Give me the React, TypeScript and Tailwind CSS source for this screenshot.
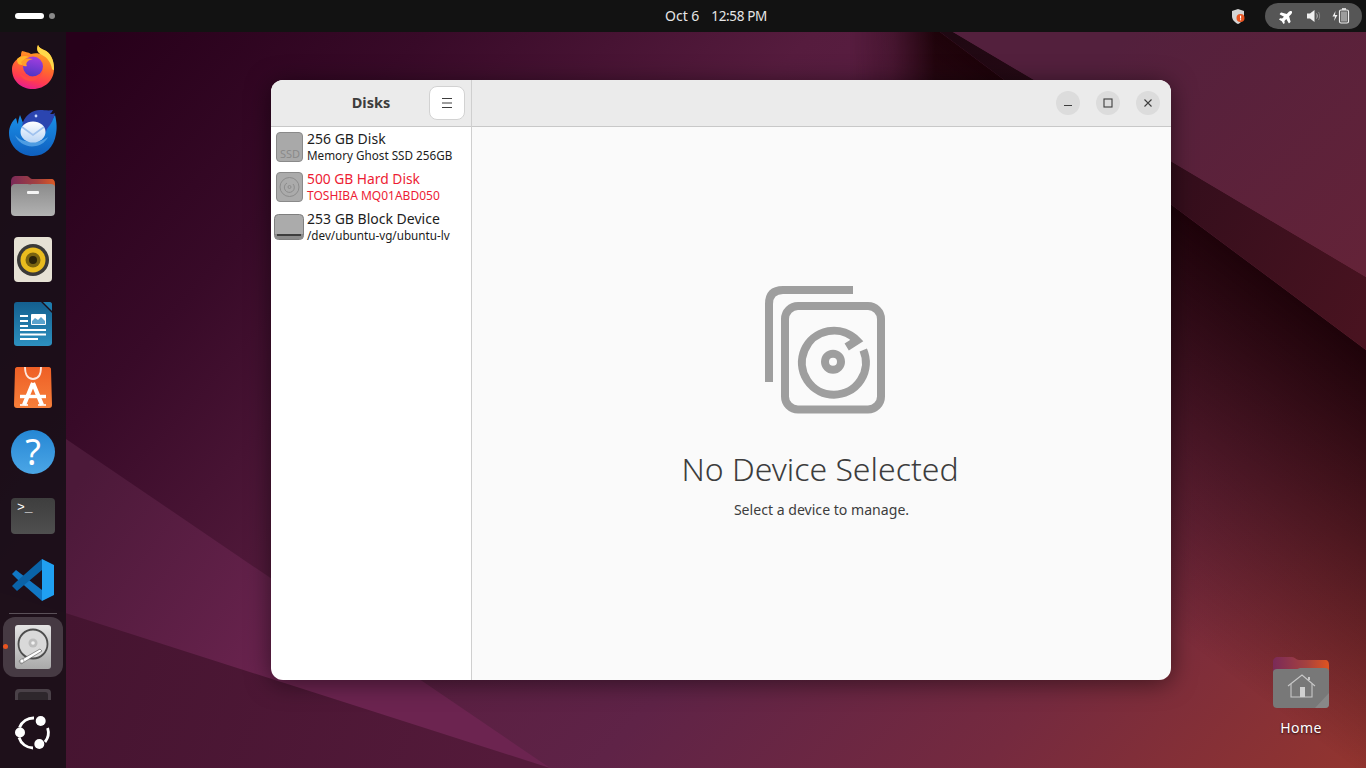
import React from "react";
import { FaPlane } from "react-icons/fa";

const font = { fontFamily: '"Noto Sans", "Open Sans", sans-serif' };

function Wallpaper() {
  return (
    <svg className="absolute inset-0 block" width="1366" height="768" viewBox="0 0 1366 768">
      <defs>
        <linearGradient id="base" gradientUnits="userSpaceOnUse" x1="100" y1="32" x2="1165" y2="991">
          <stop offset="0" stopColor="#27001a" />
          <stop offset="0.17" stopColor="#380a28" />
          <stop offset="0.37" stopColor="#561c3e" />
          <stop offset="0.6" stopColor="#5f2347" />
          <stop offset="0.8" stopColor="#752a3f" />
          <stop offset="1" stopColor="#93352f" />
        </linearGradient>
        <linearGradient id="lit" gradientUnits="userSpaceOnUse" x1="66" y1="500" x2="300" y2="670">
          <stop offset="0" stopColor="#4c1939" />
          <stop offset="1" stopColor="#6c2450" />
        </linearGradient>
        <linearGradient id="under" gradientUnits="userSpaceOnUse" x1="66" y1="620" x2="500" y2="768">
          <stop offset="0" stopColor="#451430" />
          <stop offset="1" stopColor="#541a3a" />
        </linearGradient>
        <linearGradient id="shade" gradientUnits="userSpaceOnUse" x1="1171" y1="205" x2="967" y2="477">
          <stop offset="0" stopColor="#1c0208" stopOpacity="0.97" />
          <stop offset="1" stopColor="#1c0208" stopOpacity="0" />
        </linearGradient>
        <linearGradient id="fadeX" gradientUnits="userSpaceOnUse" x1="850" y1="0" x2="935" y2="0">
          <stop offset="0" stopColor="#000" />
          <stop offset="0.5" stopColor="#555" />
          <stop offset="1" stopColor="#fff" />
        </linearGradient>
        <mask id="fadeMask" maskUnits="userSpaceOnUse" x="0" y="0" width="1366" height="768">
          <rect width="1366" height="768" fill="url(#fadeX)" />
        </mask>
        <linearGradient id="band" gradientUnits="userSpaceOnUse" x1="950" y1="40" x2="1366" y2="330">
          <stop offset="0" stopColor="#1f0812" />
          <stop offset="0.55" stopColor="#350e1c" />
          <stop offset="1" stopColor="#491320" />
        </linearGradient>
        <linearGradient id="topright" gradientUnits="userSpaceOnUse" x1="1130" y1="32" x2="1366" y2="277">
          <stop offset="0" stopColor="#53203d" />
          <stop offset="1" stopColor="#642338" />
        </linearGradient>
      </defs>
      <rect width="1366" height="768" fill="url(#base)" />
      <polygon points="66,439 550,768 66,768" fill="url(#lit)" />
      <polygon points="0,592 550,768 0,768" fill="url(#under)" />
      <polygon points="940,32 1366,350 1366,900 640,900 640,32" fill="url(#shade)" mask="url(#fadeMask)" />
      <polygon points="940,32 953,32 1366,277 1366,350" fill="url(#band)" />
      <polygon points="953,32 1366,32 1366,277" fill="url(#topright)" />
    </svg>
  );
}

function Firefox() {
  return (
    <svg width="48" height="48" viewBox="0 1 48 48">
      <defs>
        <linearGradient id="ffb" x1="0.7" y1="0" x2="0.4" y2="1">
          <stop offset="0" stopColor="#ffb21f" />
          <stop offset="0.5" stopColor="#ff6a2d" />
          <stop offset="0.8" stopColor="#ff3a52" />
          <stop offset="1" stopColor="#e51f8e" />
        </linearGradient>
        <linearGradient id="ffp" x1="0.6" y1="0" x2="0.4" y2="1">
          <stop offset="0" stopColor="#a33ee0" />
          <stop offset="1" stopColor="#4f35c4" />
        </linearGradient>
      </defs>
      <path d="M29 2C27 7 29 10 33 12C30 10 26 10 22 11C19 9 16 9 13 8C12 10 12 11 12 13C7 17 3 20 3 26C3 38 12 46 24 46C36 46 45 37 45 26C45 17 41 9 35 7C33 6 30 5 29 2Z" fill="url(#ffb)" />
      <path d="M29 2C27 7 29 10 33 12C39 15 42 20 43 26C45 28 45 27 45 25C45 16 41 9 35 7C33 6 30 5 29 2Z" fill="#ffd94a" />
      <path d="M8 16C11 13 16 12 20 14C16 15 13 18 13 22C9 22 8 19 8 16Z" fill="#ffb52b" />
      <circle cx="24" cy="23.5" r="10" fill="url(#ffp)" />
      <path d="M12 19C15 15 20 15 24 16C19 17 16 20 18 23C14 24 13 22 12 19Z" fill="#ff9d2a" />
      <path d="M34 27C33 33 28 38 22 38C16 38 11 34 10 29C13 33 18 35 23 34C28 33 32 31 34 27Z" fill="#ff4a44" />
    </svg>
  );
}

function Thunderbird() {
  return (
    <svg width="48" height="48" viewBox="0 1 48 48">
      <defs>
        <linearGradient id="tbb" x1="0.5" y1="0" x2="0.5" y2="1">
          <stop offset="0" stopColor="#1a8fe8" />
          <stop offset="1" stopColor="#0f5fbe" />
        </linearGradient>
        <linearGradient id="tbe" x1="0.5" y1="0" x2="0.5" y2="1">
          <stop offset="0" stopColor="#ffffff" />
          <stop offset="1" stopColor="#b8d4f5" />
        </linearGradient>
      </defs>
      <path d="M11 8C13 13 14 16 15 18C24 30 38 22 46 8C48 16 48 22 47 27C45 40 36 49 24 49C11 49 0 39 0 26C0 20 3 14 7 11C8 14 8 16 9 17C9 14 10 11 11 8Z" fill="url(#tbb)" />
      <path d="M14 15C17 8 23 3 31 3C36 3 39 4 44 3C43 5 42 6 41 7C43 7 45 7 46 6C45 12 42 17 38 22C36 29 28 32 20 31C14 27 12 21 14 15Z" fill="#2b45b0" />
      <circle cx="27" cy="9" r="1.4" fill="#c8d8ff" />
      <path d="M6 28C9 36 18 41 27 39C33 38 37 34 39 30C35 33 30 35 25 35C17 35 10 33 6 28Z" fill="#7ec3f5" opacity="0.55" />
      <ellipse cx="24" cy="25" rx="12.5" ry="10.5" fill="url(#tbe)" />
      <path d="M13 20L24 28L35 20" fill="none" stroke="#9fc2ee" strokeWidth="1.6" />
    </svg>
  );
}

function Files() {
  return (
    <svg width="48" height="48" viewBox="0 0 48 48">
      <defs>
        <linearGradient id="fback" x1="0" y1="0" x2="1" y2="0">
          <stop offset="0" stopColor="#7a2a58" />
          <stop offset="0.6" stopColor="#a5413f" />
          <stop offset="1" stopColor="#dc5a26" />
        </linearGradient>
        <linearGradient id="ffront" x1="0.5" y1="0" x2="0.5" y2="1">
          <stop offset="0" stopColor="#8b8b8b" />
          <stop offset="1" stopColor="#b2b2b2" />
        </linearGradient>
      </defs>
      <path d="M2 10C2 6 4 4 7 4H18C20 4 21 7 23 7H42C45 7 46 9 46 12V24H2Z" fill="url(#fback)" />
      <path d="M2 16C2 14 4 12 6 12H18C20 12 21 13 23 12H42C44 12 46 13 46 15V40C46 43 44 44 42 44H6C4 44 2 43 2 40Z" fill="url(#ffront)" />
      <rect x="18" y="19" width="12" height="3" rx="1" fill="#f4f4f4" />
    </svg>
  );
}

function Rhythmbox() {
  return (
    <svg width="48" height="48" viewBox="0 0 48 48">
      <rect x="5" y="1" width="38" height="45" rx="4" fill="#e6e1d4" />
      <circle cx="24" cy="24" r="16" fill="#3b3a38" />
      <circle cx="24" cy="24" r="12.5" fill="#eabc1e" />
      <circle cx="24" cy="24" r="7.5" fill="#7a6410" />
      <circle cx="24" cy="24" r="4" fill="#2b2308" />
    </svg>
  );
}

function Writer() {
  return (
    <svg width="48" height="48" viewBox="0 0 48 48">
      <defs>
        <linearGradient id="wr" x1="0.5" y1="0" x2="0.5" y2="1">
          <stop offset="0" stopColor="#145f8f" />
          <stop offset="1" stopColor="#2d90bf" />
        </linearGradient>
      </defs>
      <path d="M8 2H32L43 13V43C43 45 41 46 39 46H8C6 46 5 45 5 43V5C5 3 6 2 8 2Z" fill="url(#wr)" />
      <path d="M34 2H41C42 2 43 3 43 4V11Z" fill="#1e7cad" />
      <rect x="11" y="15" width="8" height="2" fill="#fff" />
      <rect x="11" y="20" width="8" height="2" fill="#fff" />
      <rect x="11" y="25" width="8" height="2" fill="#fff" />
      <rect x="22" y="14" width="15" height="11" rx="1" fill="#fff" />
      <path d="M23 24V21L26 18L29 20L32 17L36 21V24Z" fill="#5aa3cd" />
      <rect x="11" y="29" width="26" height="2" fill="#fff" />
      <rect x="11" y="33.5" width="26" height="2" fill="#fff" />
      <rect x="11" y="38" width="18" height="2" fill="#fff" />
    </svg>
  );
}

function AppCenter() {
  return (
    <svg width="48" height="48" viewBox="0 0 48 48">
      <defs>
        <linearGradient id="ac" x1="0.5" y1="0" x2="0.5" y2="1">
          <stop offset="0" stopColor="#ee5f26" />
          <stop offset="1" stopColor="#f77f3a" />
        </linearGradient>
      </defs>
      <path d="M8 3H40C41 3 42 4 42 5L43 41C43 43 42 44 40 44H8C6 44 5 43 5 41L6 5C6 4 7 3 8 3Z" fill="url(#ac)" />
      <path d="M16 3C16 11 19 15 24 15C29 15 32 11 32 3" fill="none" stroke="#fff" strokeOpacity="0.85" strokeWidth="1.8" />
      <path d="M24 19L15 41M24 19L33 41" stroke="#fff" strokeWidth="4.2" fill="none" />
      <path d="M11 32.5H37" stroke="#fff" strokeWidth="3.4" />
      <path d="M11 41H19M29 41H37" stroke="#fff" strokeOpacity="0.8" strokeWidth="2" />
    </svg>
  );
}

function Help() {
  return (
    <div className="relative flex h-[44px] w-[44px] items-center justify-center rounded-full bg-gradient-to-b from-[#2487d4] to-[#4ba6e6] text-[36px] leading-none text-white" style={font}>
      ?
    </div>
  );
}

function Terminal() {
  return (
    <div className="flex h-[36px] w-[44px] rounded-[4px] bg-gradient-to-b from-[#3e3e3e] to-[#4f4f4f] pl-[6px] pt-[2px] text-[13px] leading-[15px] text-white" style={{ fontFamily: '"Liberation Mono", monospace' }}>
      &gt;_
    </div>
  );
}

function VSCode() {
  return (
    <svg width="48" height="48" viewBox="0 0 48 48">
      <polygon points="33,34 33,45 8,23 3,18 7,14 " fill="#1177c4" />
      <polygon points="33,3 33,14 8,35 3,30 7,26 " fill="#0a63a8" />
      <polygon points="33,3 45,9 45,39 33,45 " fill="#20a0f2" />
    </svg>
  );
}

function DiskApp() {
  return (
    <svg width="48" height="48" viewBox="0 0 48 48">
      <defs>
        <linearGradient id="dk" x1="0.5" y1="0" x2="0.5" y2="1">
          <stop offset="0" stopColor="#e4e4e4" />
          <stop offset="1" stopColor="#a9a9a9" />
        </linearGradient>
      </defs>
      <rect x="6" y="2" width="36" height="44" rx="3" fill="url(#dk)" />
      <circle cx="24" cy="21" r="14.5" fill="#d9d9d9" stroke="#4d4d4d" strokeWidth="1.8" />
      <circle cx="24" cy="20" r="4.5" fill="#bdbdbd" />
      <circle cx="24" cy="20" r="1.8" fill="#f2f2f2" />
      <path d="M10 38L12 41L33 28L31 26Z" fill="#fff" stroke="#555" strokeWidth="0.6" />
      <circle cx="13" cy="38" r="2" fill="#fff" stroke="#666" strokeWidth="0.5" />
    </svg>
  );
}

function UbuntuLogo() {
  return (
    <svg width="38" height="38" viewBox="0 0 38 38">
      <g fill="none" stroke="#fff" strokeWidth="2.8">
        <path d="M5.5 13.5A15 15 0 0 1 20 4" />
        <path d="M33.6 14A15 15 0 0 1 31 28" />
        <path d="M19 34A15 15 0 0 1 5 23.5" />
      </g>
      <circle cx="26.7" cy="7" r="5" fill="#fff" />
      <circle cx="6" cy="18.5" r="5" fill="#fff" />
      <circle cx="25.3" cy="30" r="5" fill="#fff" />
    </svg>
  );
}

function DockItem({ children }: { children: React.ReactNode }) {
  return <div className="flex h-16 w-full shrink-0 items-center justify-center">{children}</div>;
}

function Dock() {
  return (
    <div className="flex h-full w-[66px] shrink-0 flex-col bg-[#1a1018]/90 pt-[4px]">
      <DockItem><Firefox /></DockItem>
      <DockItem><Thunderbird /></DockItem>
      <DockItem><Files /></DockItem>
      <DockItem><Rhythmbox /></DockItem>
      <DockItem><Writer /></DockItem>
      <DockItem><AppCenter /></DockItem>
      <DockItem><Help /></DockItem>
      <DockItem><Terminal /></DockItem>
      <DockItem><VSCode /></DockItem>
      <div className="mx-[9px] mt-[1px] h-px w-[48px] shrink-0 bg-[#5a5058]" />
      <div className="relative mx-[3px] mt-[3px] flex h-[60px] w-[60px] shrink-0 items-center justify-center rounded-[12px] bg-[#463a43]">
        <DiskApp />
        <div className="absolute left-[0px] top-[27px] h-[5px] w-[5px] rounded-full bg-[#e95420]" />
      </div>
      <div className="mx-[15px] mt-[12px] h-[11px] w-[36px] shrink-0 overflow-hidden rounded-t-[4px] bg-[#4a4148] px-[3px] pt-[3px]">
        <div className="h-[8px] rounded-t-[3px] bg-[#2e272c]" />
      </div>
      <div className="mx-[14px] mt-[14px] shrink-0"><UbuntuLogo /></div>
    </div>
  );
}

function TopBar() {
  return (
    <div className="relative flex h-8 w-full shrink-0 items-center justify-between bg-[#121212] text-[#e6e6e6]" style={font}>
      <div className="flex items-center gap-[5px] pl-[15px]">
        <div className="h-[6px] w-[29px] rounded-full bg-white" />
        <div className="h-[6px] w-[6px] rounded-full bg-[#8a8a8a]" />
      </div>
      <div className="absolute left-[665px] top-[6px] flex items-baseline gap-[12px] text-[14px] leading-[19px]">
        <span>Oct 6</span>
        <span className="text-[13.5px] tracking-[-0.35px]">12:58 PM</span>
      </div>
      <div className="flex items-center pr-[4px]">
        <svg className="mr-[19px]" width="16" height="16" viewBox="0 0 16 16">
          <path d="M8 1L14 3V8C14 12 11 14.5 8 16C5 14.5 2 12 2 8V3Z" fill="#d4d4d4" />
          <circle cx="10.5" cy="10" r="4" fill="#e95420" />
          <rect x="10" y="7.6" width="1.1" height="3" fill="#fff" />
          <rect x="10" y="11.2" width="1.1" height="1.1" fill="#fff" />
        </svg>
        <div className="flex h-[26px] w-[97px] items-center rounded-full bg-[#565656] pl-[14px]">
          <FaPlane className="-rotate-45 text-[15px] text-white" />
          <svg className="ml-[12px]" width="16" height="16" viewBox="0 0 16 16">
            <path d="M1 5.5H4L8.5 2V14L4 10.5H1Z" fill="#f0f0f0" />
            <path d="M10.5 5.5C11.5 7 11.5 9 10.5 10.5" fill="none" stroke="#bbb" strokeWidth="1" />
            <path d="M12.5 4C14 6.2 14 9.8 12.5 12" fill="none" stroke="#888" strokeWidth="1" />
          </svg>
          <svg className="ml-[10px]" width="18" height="18" viewBox="0 0 18 18">
            <path d="M3.5 4L0.5 9.5H3L2 14L5.5 8H3Z" fill="#f0f0f0" />
            <rect x="7.5" y="3" width="9" height="13" rx="1.5" fill="none" stroke="#f0f0f0" strokeWidth="1.2" />
            <rect x="10" y="1.2" width="4" height="1.6" fill="#f0f0f0" />
            <rect x="9" y="4.5" width="6" height="10" fill="#d8d8d8" fillOpacity="0.55" />
          </svg>
        </div>
      </div>
    </div>
  );
}

function SsdIcon() {
  return (
    <svg width="30" height="32" viewBox="0 0 30 32">
      <rect x="1.5" y="1.5" width="26" height="29" rx="3.5" fill="#a9a9a9" stroke="#8a8a8a" />
      <text x="15" y="27" textAnchor="middle" fontSize="11" fill="#8a8a8a" fontFamily="Noto Sans, sans-serif">SSD</text>
    </svg>
  );
}

function HddIcon() {
  return (
    <svg width="30" height="32" viewBox="0 0 30 32">
      <rect x="1.5" y="1.5" width="26" height="29" rx="3.5" fill="#ababab" stroke="#8a8a8a" />
      <circle cx="14.5" cy="16" r="9.5" fill="none" stroke="#8c8c8c" />
      <path d="M18 13A5 5 0 1 1 12 12" fill="none" stroke="#8c8c8c" />
      <circle cx="14.5" cy="16" r="1.5" fill="none" stroke="#8c8c8c" />
    </svg>
  );
}

function BlockIcon() {
  return (
    <svg className="-ml-[1px]" width="32" height="28" viewBox="0 0 32 28">
      <rect x="1.5" y="1.5" width="29" height="25" rx="4" fill="#ababab" stroke="#7f7f7f" />
      <path d="M2 21H30V23C30 25 28 26 26 26H6C4 26 2 25 2 23Z" fill="#8a8a8a" />
      <rect x="4" y="21" width="24" height="2" fill="#3d3d3d" />
    </svg>
  );
}

function DriveRow({ icon, title, sub, red }: { icon: React.ReactNode; title: string; sub: string; red?: boolean }) {
  return (
    <div className={`flex h-10 items-center ${red ? "text-[#ed1c34]" : "text-[#1c1c1c]"}`}>
      <div className="flex w-[36px] shrink-0 justify-center pl-[1px]">{icon}</div>
      <div className="mb-[2px] flex flex-col">
        <div className={`whitespace-nowrap leading-[18px] ${red ? "text-[13.8px]" : "text-[14px]"}`}>{title}</div>
        <div className={`whitespace-nowrap leading-[15px] ${red ? "text-[12px]" : "text-[11.7px]"}`}>{sub}</div>
      </div>
    </div>
  );
}

function WinBtn({ children }: { children: React.ReactNode }) {
  return <div className="flex h-6 w-6 items-center justify-center rounded-full bg-[#dcdcdc]">{children}</div>;
}

function HeroIcon() {
  return (
    <svg width="128" height="128" viewBox="758 286 128 128">
      <g fill="none" stroke="#9e9e9e" strokeWidth="8">
        <path d="M769 382V304Q769 290 783 290H853" />
        <rect x="785" y="306" width="96" height="103.5" rx="13" />
        <path d="M863.3 350A32 32 0 1 1 857 340.5L846.7 347" />
        <circle cx="833" cy="361.7" r="8" />
      </g>
    </svg>
  );
}

function DisksWindow() {
  return (
    <div className="absolute left-[205px] top-[48px] flex h-[600px] w-[900px] overflow-hidden rounded-[12px] shadow-[0_3px_24px_rgba(0,0,0,0.5)]" style={font}>
      <div className="flex w-[201px] shrink-0 flex-col border-r border-[#cfcfcf] bg-white">
        <div className="grid h-[47px] shrink-0 grid-cols-[1fr_auto_1fr] items-center border-b border-[#c8c8c8] bg-[#ebebeb]">
          <div />
          <div className="mb-[1px] text-[14.5px] font-bold text-[#3d3d3d]">Disks</div>
          <div className="mr-[6px] flex h-[34px] w-[36px] items-center justify-center justify-self-end rounded-[8px] border border-[#d2d2d2] bg-white">
            <svg width="12" height="12" viewBox="0 0 12 12">
              <path d="M1 1.5H11M1 6H11M1 10.5H11" stroke="#3d3d3d" strokeWidth="1" />
            </svg>
          </div>
        </div>
        <DriveRow icon={<SsdIcon />} title="256 GB Disk" sub="Memory Ghost SSD 256GB" />
        <DriveRow icon={<HddIcon />} title="500 GB Hard Disk" sub="TOSHIBA MQ01ABD050" red />
        <DriveRow icon={<BlockIcon />} title="253 GB Block Device" sub="/dev/ubuntu-vg/ubuntu-lv" />
      </div>
      <div className="flex min-w-0 flex-1 flex-col bg-[#fafafa]">
        <div className="flex h-[47px] shrink-0 items-center justify-end gap-4 border-b border-[#c8c8c8] bg-[#ebebeb] pr-[11px]">
          <WinBtn>
            <svg width="10" height="10" viewBox="0 0 10 10"><path d="M1 7.5H9" stroke="#3d3d3d" strokeWidth="1" /></svg>
          </WinBtn>
          <WinBtn>
            <svg width="10" height="10" viewBox="0 0 10 10"><rect x="1" y="1" width="8" height="8" fill="none" stroke="#3d3d3d" strokeWidth="1.1" /></svg>
          </WinBtn>
          <WinBtn>
            <svg width="10" height="10" viewBox="0 0 10 10"><path d="M1.5 1.5L8.5 8.5M8.5 1.5L1.5 8.5" stroke="#3d3d3d" strokeWidth="1.1" /></svg>
          </WinBtn>
        </div>
        <div className="flex flex-1 flex-col items-center justify-center pb-[1px]">
          <HeroIcon />
          <div className="mt-[33px] pr-[3px] text-[32px] font-light leading-[44px] text-[#3d3d3d]">No Device Selected</div>
          <div className="mt-[9px] text-[14.1px] leading-[20px] text-[#3d3d3d]">Select a device to manage.</div>
        </div>
      </div>
    </div>
  );
}

function HomeIcon() {
  return (
    <div className="absolute left-[1195px] top-[625px] flex w-[80px] flex-col items-center" style={font}>
      <svg width="56" height="52" viewBox="0 0 56 52">
        <defs>
          <linearGradient id="hb" x1="0" y1="0" x2="1" y2="0">
            <stop offset="0" stopColor="#7a2a58" />
            <stop offset="0.6" stopColor="#a5413f" />
            <stop offset="1" stopColor="#e0541f" />
          </linearGradient>
        </defs>
        <path d="M0 5C0 2 2 0 5 0H19C22 0 23 3 26 3H52C55 3 56 5 56 8V20H0Z" fill="url(#hb)" />
        <path d="M0 15C0 13 2 12 4 12H22C24 12 25 12 27 11H52C54 11 56 12 56 14V47C56 50 54 51 52 51H4C2 51 0 50 0 47Z" fill="#787878" />
        <path d="M56 36V47C56 50 54 51 52 51H42Z" fill="#888" />
        <g fill="none" stroke="#c8c8c8" strokeWidth="1.1">
          <path d="M15 29L29 18L42 29" />
          <path d="M18 27V40H39V27" />
          <path d="M36 20V23" strokeWidth="2" />
        </g>
        <rect x="27" y="30" width="5" height="10" fill="#d0d0d0" />
      </svg>
      <div className="mt-[9px] text-[14px] leading-[20px] tracking-[0.4px] text-white [text-shadow:0_1px_2px_rgba(0,0,0,0.7)]">Home</div>
    </div>
  );
}

export default function App() {
  return (
    <div className="relative h-[768px] w-[1366px] overflow-hidden">
      <Wallpaper />
      <div className="relative flex h-full flex-col">
        <TopBar />
        <div className="flex min-h-0 flex-1">
          <Dock />
          <div className="relative flex-1">
            <DisksWindow />
            <HomeIcon />
          </div>
        </div>
      </div>
    </div>
  );
}
